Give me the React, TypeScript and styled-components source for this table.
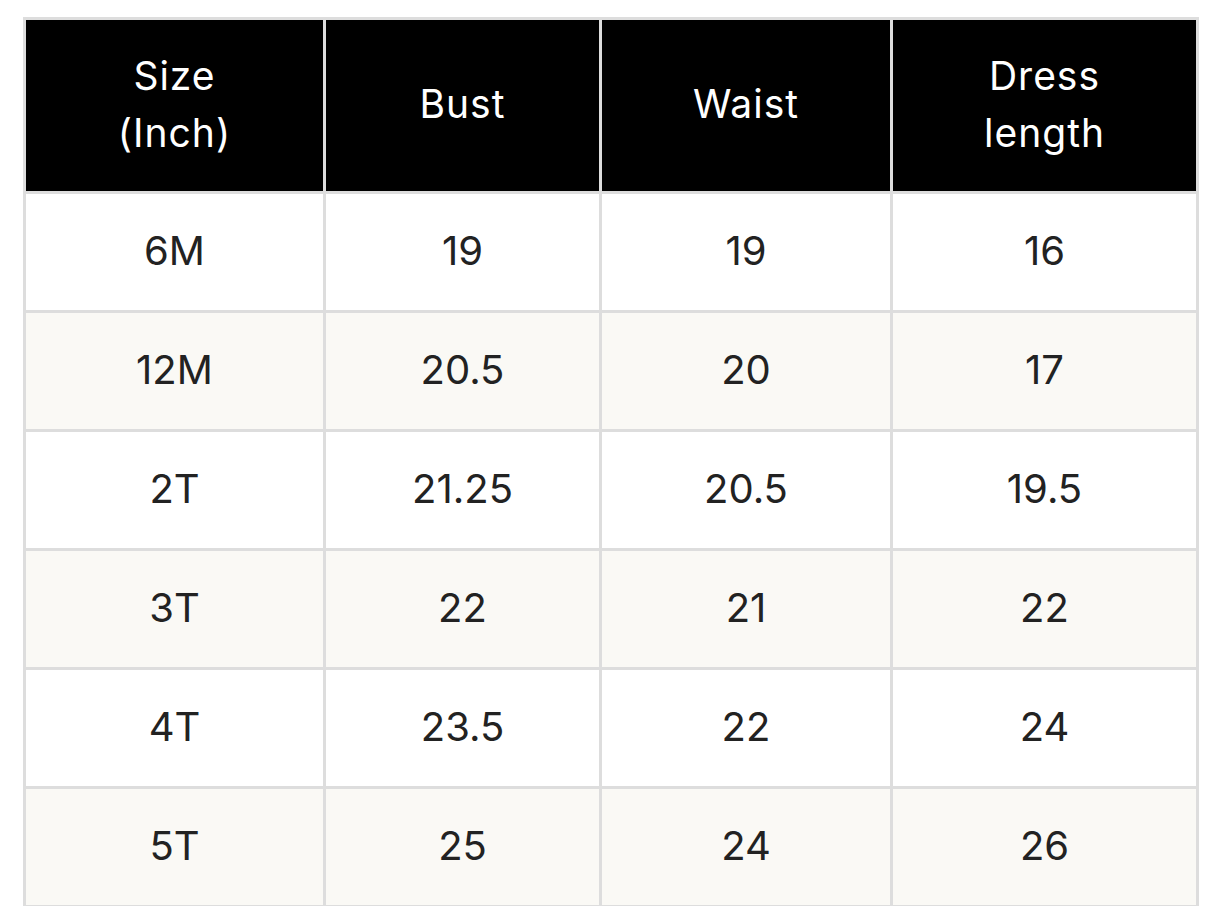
import React from "react"
import styled, { createGlobalStyle } from "styled-components"

const GlobalStyle = createGlobalStyle`
  body {
    margin: 0;
    background: #ffffff;
    font-family: "Inter", "Noto Sans", sans-serif;
  }
`

const Page = styled.div`
  padding: 17px 0 0 23px;
`

const Grid = styled.div`
  display: grid;
  grid-template-columns: 297px 273px 288px 303px;
  grid-template-rows: 171px repeat(6, 116px);
  gap: 3px;
  padding: 3px;
  width: max-content;
  background: #dddddd;
`

const HeadCell = styled.div`
  background: #000000;
  color: #ffffff;
  display: flex;
  align-items: center;
  justify-content: center;
  text-align: center;
  font-size: 39px;
  letter-spacing: 1px;
  line-height: 57px;
  padding-bottom: 4px;
`

const Cell = styled.div<{ $alt: boolean }>`
  background: ${(p) => (p.$alt ? "#faf9f5" : "#ffffff")};
  color: #222222;
  display: flex;
  align-items: center;
  justify-content: center;
  font-size: 40px;
  padding-bottom: 4px;
`

const headers = [["Size", "(Inch)"], ["Bust"], ["Waist"], ["Dress", "length"]]

const rows = [
  ["6M", "19", "19", "16"],
  ["12M", "20.5", "20", "17"],
  ["2T", "21.25", "20.5", "19.5"],
  ["3T", "22", "21", "22"],
  ["4T", "23.5", "22", "24"],
  ["5T", "25", "24", "26"],
]

const App = () => {
  return (
    <Page>
      <GlobalStyle />
      <Grid>
        {headers.map((h, i) => (
          <HeadCell key={`h-${i}`}>
            <div>
              {h.map((line) => (
                <div key={line}>{line}</div>
              ))}
            </div>
          </HeadCell>
        ))}
        {rows.map((r, ri) =>
          r.map((v, ci) => (
            <Cell key={`${ri}-${ci}`} $alt={ri % 2 === 1}>
              {v}
            </Cell>
          ))
        )}
      </Grid>
    </Page>
  )
}

export default App
